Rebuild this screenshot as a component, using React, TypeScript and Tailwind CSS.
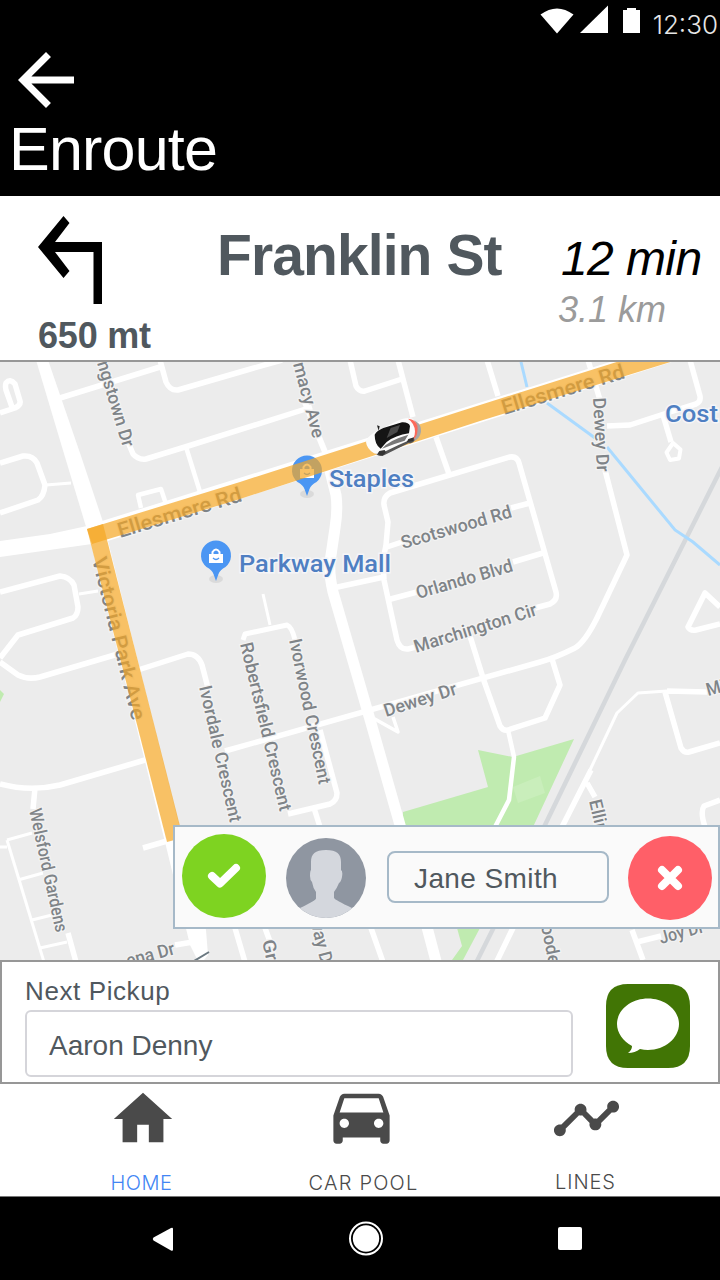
import React from "react";
import { MdArrowBack, MdDirectionsCar, MdHome, MdTimeline } from "react-icons/md";

type Label = { text: string; x1: number; y1: number; x2: number; y2: number; size: number };

const streetLabels: Label[] = [
  { text: "ngstown Dr", x1: 97, y1: 363, x2: 123, y2: 448, size: 18 },
  { text: "macy Ave", x1: 293, y1: 364, x2: 313, y2: 439, size: 18 },
  { text: "Ellesmere Rd", x1: 120, y1: 538, x2: 243, y2: 501, size: 21 },
  { text: "Ellesmere Rd", x1: 504, y1: 415, x2: 626, y2: 378, size: 21 },
  { text: "Victoria Park Ave", x1: 92, y1: 559, x2: 132, y2: 721, size: 21 },
  { text: "Dewey Dr", x1: 593, y1: 398, x2: 597, y2: 472, size: 18 },
  { text: "Scotswood Rd", x1: 403, y1: 549, x2: 513, y2: 517, size: 18 },
  { text: "Orlando Blvd", x1: 418, y1: 599, x2: 514, y2: 571, size: 18 },
  { text: "Marchington Cir", x1: 416, y1: 653, x2: 538, y2: 615, size: 18 },
  { text: "Dewey Dr", x1: 386, y1: 717, x2: 458, y2: 694, size: 18 },
  { text: "Ivorwood Crescent", x1: 289, y1: 640, x2: 319, y2: 785, size: 18 },
  { text: "Robertsfield Crescent", x1: 240, y1: 644, x2: 280, y2: 812, size: 18 },
  { text: "Ivordale Crescent", x1: 199, y1: 687, x2: 230, y2: 823, size: 18 },
  { text: "Welsford Gardens", x1: 29, y1: 810, x2: 56, y2: 933, size: 18 },
  { text: "Elling", x1: 589, y1: 801, x2: 599, y2: 844, size: 18 },
  { text: "Mi", x1: 708, y1: 696, x2: 726, y2: 691, size: 18 },
  { text: "Joy Dr", x1: 661, y1: 944, x2: 705, y2: 932, size: 18 },
  { text: "ena Dr", x1: 128, y1: 967, x2: 176, y2: 954, size: 18 },
  { text: "Gre", x1: 262, y1: 941, x2: 269, y2: 972, size: 18 },
  { text: "way D", x1: 310, y1: 920, x2: 321, y2: 964, size: 18 },
  { text: "oode", x1: 541, y1: 926, x2: 549, y2: 965, size: 18 },
];

function StreetLabel({ text, x1, y1, x2, y2, size }: Label) {
  const angle = (Math.atan2(y2 - y1, x2 - x1) * 180) / Math.PI;
  return (
    <text
      transform={`translate(${x1} ${y1}) rotate(${angle})`}
      textLength={Math.hypot(x2 - x1, y2 - y1)}
      lengthAdjust="spacingAndGlyphs"
      fontSize={size}
      fontWeight="500"
      fill="#7f8488"
      stroke="#f3f3f3"
      strokeWidth="2.5"
      paintOrder="stroke"
    >
      {text}
    </text>
  );
}

function Pin({ x, y }: { x: number; y: number }) {
  return (
    <g transform={`translate(${x} ${y})`}>
      <ellipse cx="0" cy="23" rx="7" ry="4" fill="#cfcfcf" opacity="0.6" />
      <path d="M0 25 L-2.500 18 Q-4 14 -9.500 11 A15 15 0 1 1 9.500 11 Q4 14 2.500 18 Z" fill="#4b96f3" />
      <path d="M-7-2 H7 V7 H-7 Z" fill="#fff" />
      <path d="M-3.500-2 V-4 Q0-9 3.500-4 V-2" fill="none" stroke="#fff" strokeWidth="2" />
      <path d="M-3 2 Q0 5 3 2" fill="none" stroke="#4b96f3" strokeWidth="1.3" />
    </g>
  );
}

function Place({ text, x, y, width }: { text: string; x: number; y: number; width: number }) {
  return (
    <text
      x={x}
      y={y}
      textLength={width}
      lengthAdjust="spacingAndGlyphs"
      fontSize="24.5"
      fontWeight="500"
      fill="#4f7fc2"
      stroke="#f5f5f8"
      strokeWidth="3"
      paintOrder="stroke"
    >
      {text}
    </text>
  );
}

function Car() {
  return (
    <g transform="translate(240 360) scale(0.33333)">
      <path d="M505 176 Q546 184 543 215 Q540 238 516 246 L490 230 Z" fill="#a9a6a3" />
      <path d="M404 276 L520 234 L524 240 Q520 250 505 250 L432 286 Q414 292 404 276 Z" fill="#555" />
      <path d="M378 246 Q380 232 404 217 L470 184 Q500 170 518 176 Q536 190 529 220 Q526 236 508 241 L474 256 L432 276 Q416 286 402 280 Q380 266 378 246 Z" fill="#fcfcfc" />
      <path d="M504 176 Q538 180 532 216 Q530 232 518 240 Q526 226 525 214 Q524 190 504 176 Z" fill="#fb6a5a" />
      <path d="M404 224 Q410 212 430 204 L486 187 Q506 186 510 198 L507 220 Q466 226 440 246 L422 266 Q404 254 404 224 Z" fill="#151515" />
      <path d="M452 204 L480 195 L472 216 L440 234 Z" fill="#4a4a4a" />
      <path d="M426 266 Q444 242 505 224 L494 242 Q460 252 426 266 Z" fill="#777" />
      <path d="M412 282 L418 273 L434 270 L438 277 L428 287 Z M500 247 L505 237 L522 232 L520 243 Z" fill="#333" />
      <path d="M411 196 L419 199 L416 212 Z" fill="#222" />
    </g>
  );
}

function MapView() {
  return (
    <svg className="block h-[598px] w-full" viewBox="0 362 720 598" fontFamily="Roboto, sans-serif">
      <rect x="0" y="362" width="720" height="598" fill="#ececec" />
      <g fill="#c0ebb0">
        <path d="M403 812 L488 787 L478 750 L513 757 L574 739 L533 827 H403 Z" />
        <path d="M457 928 H480 L463 960 H452 L462 946 Z" />
        <path d="M0 690 L4 694 L0 702 Z" />
      </g>
      <path d="M513 787 L540 776 L545 793 L518 803 Z" fill="#c9eebb" />
      <path d="M722 467 L625 660 L545 825 L475 965" fill="none" stroke="#d5d8db" strokeWidth="4.5" />
      <path d="M521 362 L527 387 M547 403 L595 438 M607 447 L675 530 L693 542 L720 565" fill="none" stroke="#aadaff" strokeWidth="3" />

      <g fill="#fff">
        <path d="M36 360 L65 457 L87 530 L104 525 L80 453 L48 360 Z" />
        <path d="M0 541 L50 534 L87 526 L92 544 L0 557 Z" />
        <path d="M86 526 L626 357 L678 360 L92 546 Z" />
        <path d="M91 544 L165 842 L190 945 L200 965 L208 955 L206 930 L182 838 L104 525 Z" />
      </g>

      <g fill="none" stroke="#fff" strokeWidth="5.5" strokeLinejoin="round">
        <path d="M0 413 L15 408 Q21 405 20 401 L15 384 Q10 378 6 383 Q5 386 6 390 L12 407" />
        <path d="M0 463 L23 456 Q33 455 37 463 L45 485 Q44 496 38 500 L0 513" />
        <path d="M0 592 L60 576 Q70 577 74 585 L78 607 Q78 615 73 618 L18 635 L0 658" />
        <path d="M60 398 L160 367 M160 360 L166 382 Q170 391 178 390 L240 372 L282 360" />
        <path d="M128 442 L133 454 Q138 460 146 459 L185 447 L312 407" />
        <path d="M186 447 L200 492" strokeWidth="4.5" />
        <path d="M141 508 L138 495 L161 489 L166 504" strokeWidth="4.5" />
        <path d="M0 662 L18 675 Q28 680 40 677 L118 654 M138 670 L188 654 Q198 654 202 665 L208 688" />
        <path d="M350 360 L356 386 Q359 392 365 391 L402 379 M398 360 L413 417 M436 437 L449 474" />
        <path d="M535 608 L550 604 Q558 600 556 592 L519 463 Q517 456 510 457 L390 493 Q383 497 384 505 L388 522 L386 545 L383 560 L384 580 L397 640 Q400 650 408 649 L420 646" />
        <path d="M384 548 L405 541 M333 588 L384 577 M387 600 L417 592 M511 508 L530 503 M513 562 L543 553" />
        <path d="M263 594 L270 625" strokeWidth="3" />
        <path d="M243 640 L245 634 L287 625 Q292 627 295 640" strokeWidth="5" />
        <path d="M487 360 L498 396 M588 360 L600 400" />
        <path d="M605 470 L627 555 L597 618 Q585 642 575 648 Q555 658 540 662 L225 751" />
        <path d="M470 636 L484 681 L500 726 Q503 731 508 730 L545 718 L560 685 L552 659" />
        <path d="M508 730 L514 757 L509 800 L495 827" strokeWidth="4.5" />
        <path d="M607 426 L630 425 L667 413 L696 404 Q701 402 700 396 L690 360 M663 415 L671 442" />
        <path d="M673 443 L680.500 449.500 L679 458.500 L670 460 L666.500 452.500 Z" strokeWidth="4" />
        <path d="M720 607 L705 593 L688 627 Q690 631 696 630 L720 624" />
        <path d="M590 770 L617 713 L638 693 L667 691" strokeWidth="3" />
        <path d="M667 691 L707 692 M591 770 L563 825 L496 963 M587 783 L595 797 M665 692 L681 748 Q684 753 689 752 L720 743 M720 800 L704 806 Q700 812 705 827 M632 930 L643 960 M637 942 L661 936" />
        <path d="M373 718 L398 732 L393 717" strokeWidth="3.5" />
        <path d="M320 730 L337 793 Q337 801 330 804 L288 814 M314 808 L320 827" />
        <path d="M0 784 Q30 792 60 785 L145 760 M35 788 L33 809" />
        <path d="M143 848 L167 841 M68 933 L76 962 M175 945 L193 942 M265 928 L272 947 M371 928 L383 962 M235 928 L245 962" />
        <path d="M46 485 L71 483 M79 594 L98 591 M7 840 L44 962 M7 840 L32 833 M0 847 L7 847 M18 880 L43 873 M32 920 L52 915 M40 948 L67 942" strokeWidth="3" />
        <path d="M304 400 L325 452" strokeWidth="6" />
        <path d="M326 455 L336 495 Q338 510 335 528 L330 562 Q329 575 333 592 L371 723 L400 825 L437 965" strokeWidth="11" />
      </g>

      {streetLabels.map((label) => (
        <StreetLabel key={`${label.text}-${label.x1}`} {...label} />
      ))}
      <path d="M194 961 L209 952" stroke="#6a7880" strokeWidth="2" />
      <Place text="Staples" x={329} y={487} width={85} />
      <Place text="Parkway Mall" x={239} y={572} width={152} />
      <Place text="Cost" x={665} y={422} width={53} />
      <Pin x={216} y={556} />
      <Pin x={307} y={471} />

      <g fill="#f5a623" fillOpacity="0.7">
        <path d="M87 529 L240 482 L480 405 L623 360 L677 360 L480 421 L240 499 L92 544 Z" />
        <path d="M87 529 L103 524 L180 826 L182 838 L167 842 Z" />
      </g>
      <Car />
    </svg>
  );
}

function StatusBar() {
  return (
    <div className="flex h-[38px] items-start justify-end pr-0.5 text-white">
      <svg className="mt-[5px] h-[30px] w-[104px]" viewBox="538 5 104 30" fill="currentColor">
        <path d="M539.500 14.500 Q556 2.500 572.500 14.500 L556 33.500 Z" />
        <path d="M579 33 L607 5.500 V33 Z" />
        <path d="M622 10 H626 V8 H635 V10 H639 V33 H622 Z" />
      </svg>
      <span className="mt-[9px] ml-2.5 font-['Inter'] text-[26px] leading-8 font-light text-[#e6e6e6]">12:30</span>
    </div>
  );
}

function RiderPanel() {
  return (
    <div className="absolute top-[463px] right-0 flex h-[104px] w-[547px] items-center border-2 border-[#a6b9c8] bg-[#fafafa]">
      <svg className="-mt-0.5 ml-[7px] size-[84px] shrink-0" viewBox="0 0 84 84">
        <circle cx="42" cy="42" r="42" fill="#7ed321" />
        <path d="M30 42 L38 49.500 L54 34" fill="none" stroke="#fff" strokeWidth="8" strokeLinecap="round" strokeLinejoin="round" />
      </svg>
      <svg className="mt-0.5 ml-5 size-20 shrink-0" viewBox="0 0 80 80">
        <defs>
          <clipPath id="avatar">
            <circle cx="40" cy="40" r="40" />
          </clipPath>
        </defs>
        <g clipPath="url(#avatar)">
          <rect width="80" height="80" fill="#8f96a1" />
          <path d="M40 12 C51 12 55 16 55 24 V32 Q57 33 56 39 Q55 44 53 45 Q51 50 48 54 V60 Q49 62 66 70 V82 H14 V70 Q31 62 30 60 V54 Q27 50 26 44 Q24 42 24 38 Q24 33 25 32 V24 C25 16 29 12 40 12 Z" fill="#d4d7dd" />
        </g>
      </svg>
      <div className="ml-[21px] flex h-[52px] w-[222px] shrink-0 items-center rounded-lg border-2 border-[#a6b9c8] pt-1 pl-[25px] text-[28px] tracking-[0.4px] text-[#50585e]">
        Jane Smith
      </div>
      <svg className="mt-0.5 ml-[19px] size-[84px] shrink-0" viewBox="0 0 84 84">
        <circle cx="42" cy="42" r="42" fill="#ff5f68" />
        <path d="M34 34 L50 50 M50 34 L34 50" stroke="#fff" strokeWidth="8" strokeLinecap="round" />
      </svg>
    </div>
  );
}

export default function App() {
  return (
    <div className="flex h-[1280px] w-[720px] flex-col overflow-hidden bg-white font-['Liberation_Sans',sans-serif]">
      <header className="h-[196px] shrink-0 bg-black text-white">
        <StatusBar />
        <MdArrowBack className="ml-1 size-[84px]" />
        <h1 className="-mt-[7px] ml-[9px] text-[61px] leading-[69px] tracking-[-0.8px]">Enroute</h1>
      </header>

      <section className="flex h-[166px] shrink-0 border-b-2 border-[#979797] text-[#50585e]">
        <div className="w-[217px] pl-[37px]">
          <svg className="mt-5 h-[89px] w-[66px]" viewBox="37 216 66 89">
            <path d="M38 247 L63.500 216 L69.500 223 L55 242 H102 V304 H93.500 V252 H55 L69.500 271 L63.500 278 Z" />
          </svg>
          <p className="mt-[10px] ml-px text-[36px] leading-[41px] font-bold tracking-[-0.2px]">650 mt</p>
        </div>
        <h2 className="mt-[27px] w-[344px] text-[57px] leading-[64px] font-bold tracking-[-0.9px]">Franklin St</h2>
        <div className="italic">
          <p className="mt-[35px] text-[48px] leading-[55px] tracking-[-0.6px] whitespace-nowrap text-black">12 min</p>
          <p className="mt-[3px] -ml-[3px] text-[36px] leading-[41px] text-[#9b9b9b]">3.1 km</p>
        </div>
      </section>

      <main className="relative shrink-0">
        <MapView />
        <RiderPanel />
      </main>

      <section className="flex h-[124px] shrink-0 border-2 border-[#979797] pl-[23px]">
        <div className="w-[548px]">
          <p className="mt-[14px] text-[26px] leading-[30px] tracking-[0.6px] text-[#50585e]">Next Pickup</p>
          <div className="mt-1 flex h-[67px] items-center rounded-md border-2 border-[#d5d5da] pt-1 pl-[22px] text-[28px] text-[#50585e]">Aaron Denny</div>
        </div>
        <svg className="mt-[22px] ml-[33px] size-[84px]" viewBox="0 0 84 84">
          <path d="M22 0 H62 Q84 0 84 22 V62 Q84 84 62 84 H22 Q0 84 0 62 V22 Q0 0 22 0 Z" fill="#417505" />
          <path d="M42 14.500 C59 14.500 73 26 73 40 C73 54 59 66 42 66 Q38 66 34 65 Q29 69 22 69 Q26 66 26 62 C17 57 11 49 11 40 C11 26 25 14.500 42 14.500 Z" fill="#fff" />
        </svg>
      </section>

      <nav className="flex h-[113px] shrink-0 border-b border-[#777] text-[20px] leading-6 font-light text-[#4a4a4a]">
        <div className="ml-[72px] flex w-[142px] flex-col items-center">
          <MdHome className="size-[70px] shrink-0" />
          <span className="mt-[17px] -ml-[3px] font-['Inter'] tracking-[0.5px] text-[#4285f4]">HOME</span>
        </div>
        <div className="ml-[76px] flex w-[142px] flex-col items-center">
          <MdDirectionsCar className="-mt-[6px] size-[75px] shrink-0" />
          <span className="mt-[18px] ml-[5px] font-['Inter'] tracking-[1.2px] whitespace-nowrap">CAR POOL</span>
        </div>
        <div className="ml-[83px] flex w-[142px] flex-col items-center">
          <MdTimeline className="-mt-px size-[71px] shrink-0" />
          <span className="mt-4 -ml-px font-['Inter'] tracking-[0.9px]">LINES</span>
        </div>
      </nav>

      <footer className="flex flex-1 items-start bg-black pt-6">
        <svg className="ml-[151px] h-[36px] w-[24px]" viewBox="151 1221 24 36">
          <path d="M153.500 1237.500 Q152 1239 153.500 1240.500 L171 1250.500 Q173 1251.500 173 1249.500 V1229 Q173 1227 171 1228 Z" fill="#fff" />
        </svg>
        <svg className="ml-[173px] size-9" viewBox="0 0 36 36">
          <circle cx="18" cy="17.500" r="16" fill="none" stroke="#fff" strokeWidth="2" />
          <circle cx="18" cy="17.500" r="13.200" fill="#fff" />
        </svg>
        <div className="mt-[6px] ml-[174px] h-[23px] w-[24px] rounded-[2px] bg-white" />
      </footer>
    </div>
  );
}
